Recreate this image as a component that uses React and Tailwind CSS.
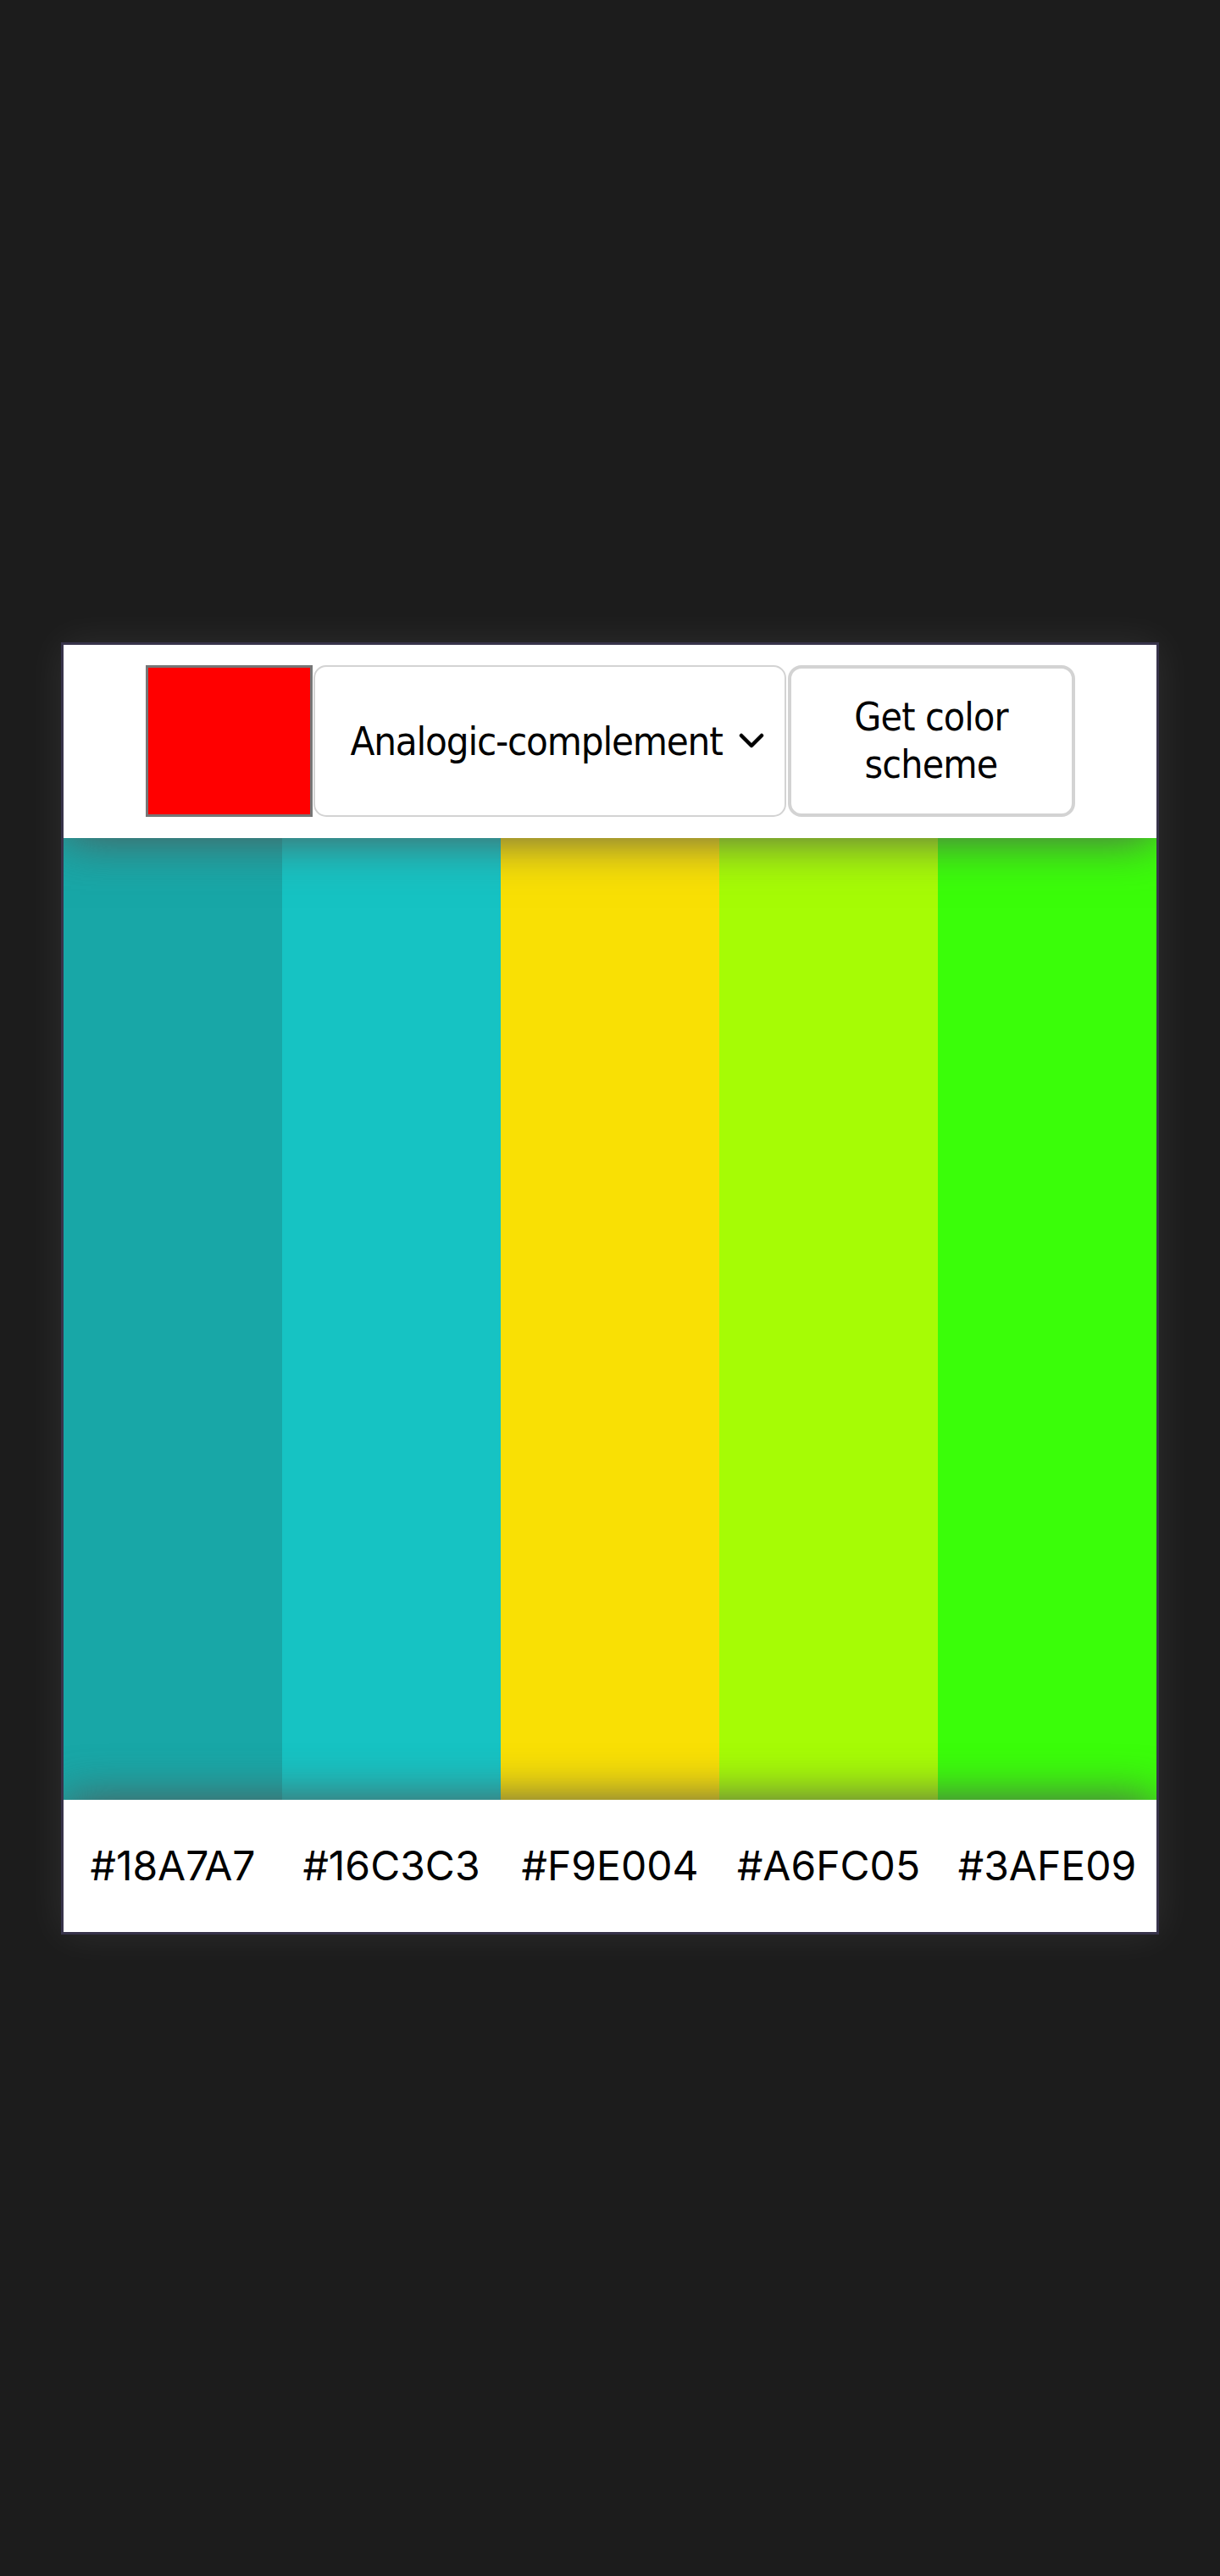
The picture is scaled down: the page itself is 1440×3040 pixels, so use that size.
import React from "react";

const colors = ["#18A7A7", "#16C3C3", "#F9E004", "#A6FC05", "#3AFE09"];

export default function App() {
  return (
    <div className="min-h-screen w-full bg-[#1c1c1c] flex items-center justify-center">
      <div className="relative w-[1296px] border-[3px] border-[#37334a] bg-white flex flex-col overflow-hidden shadow-[0_0_45px_rgba(255,255,255,0.08)]">
        <div className="relative bg-white pt-6 pb-[25px] flex justify-center items-stretch gap-0 shadow-[0_0_55px_#555555]">
          <div className="w-[197px] h-[179px] border-[3px] border-[#767676] bg-[#ff0000]" />
          <div className="ml-px w-[558px] h-[179px] rounded-[15px] border-2 border-[#d3d3d3] bg-white flex items-center pl-[42px] pr-[24px] justify-between">
            <span className="text-[47px] leading-none tracking-[-1.2px] text-black font-['DejaVu_Sans_Condensed','DejaVu_Sans',sans-serif] [font-stretch:condensed]">
              Analogic-complement
            </span>
            <svg width="30" height="20" viewBox="0 0 30 20" className="shrink-0">
              <polyline points="3,4 15,16 27,4" fill="none" stroke="#000" strokeWidth="4.5" strokeLinecap="round" strokeLinejoin="round" />
            </svg>
          </div>
          <button className="ml-[2px] w-[339px] h-[179px] rounded-[16px] border-4 border-[#d3d3d3] bg-white flex items-center justify-center text-center text-[46px] leading-[56px] tracking-[-0.8px] text-black font-['DejaVu_Sans_Condensed','DejaVu_Sans',sans-serif] [font-stretch:condensed]">
            Get color
            <br />
            scheme
          </button>
        </div>
        <div className="grid grid-cols-5 h-[1135px]">
          {colors.map((c) => (
            <div key={c} className="h-full" style={{ backgroundColor: c }} />
          ))}
        </div>
        <div className="relative bg-white h-[156px] grid grid-cols-5 items-center shadow-[0_0_55px_#555555]">
          {colors.map((c) => (
            <div key={c} className="text-center text-[48px] leading-none text-black font-['Inter',sans-serif]">
              {c}
            </div>
          ))}
        </div>
      </div>
    </div>
  );
}
